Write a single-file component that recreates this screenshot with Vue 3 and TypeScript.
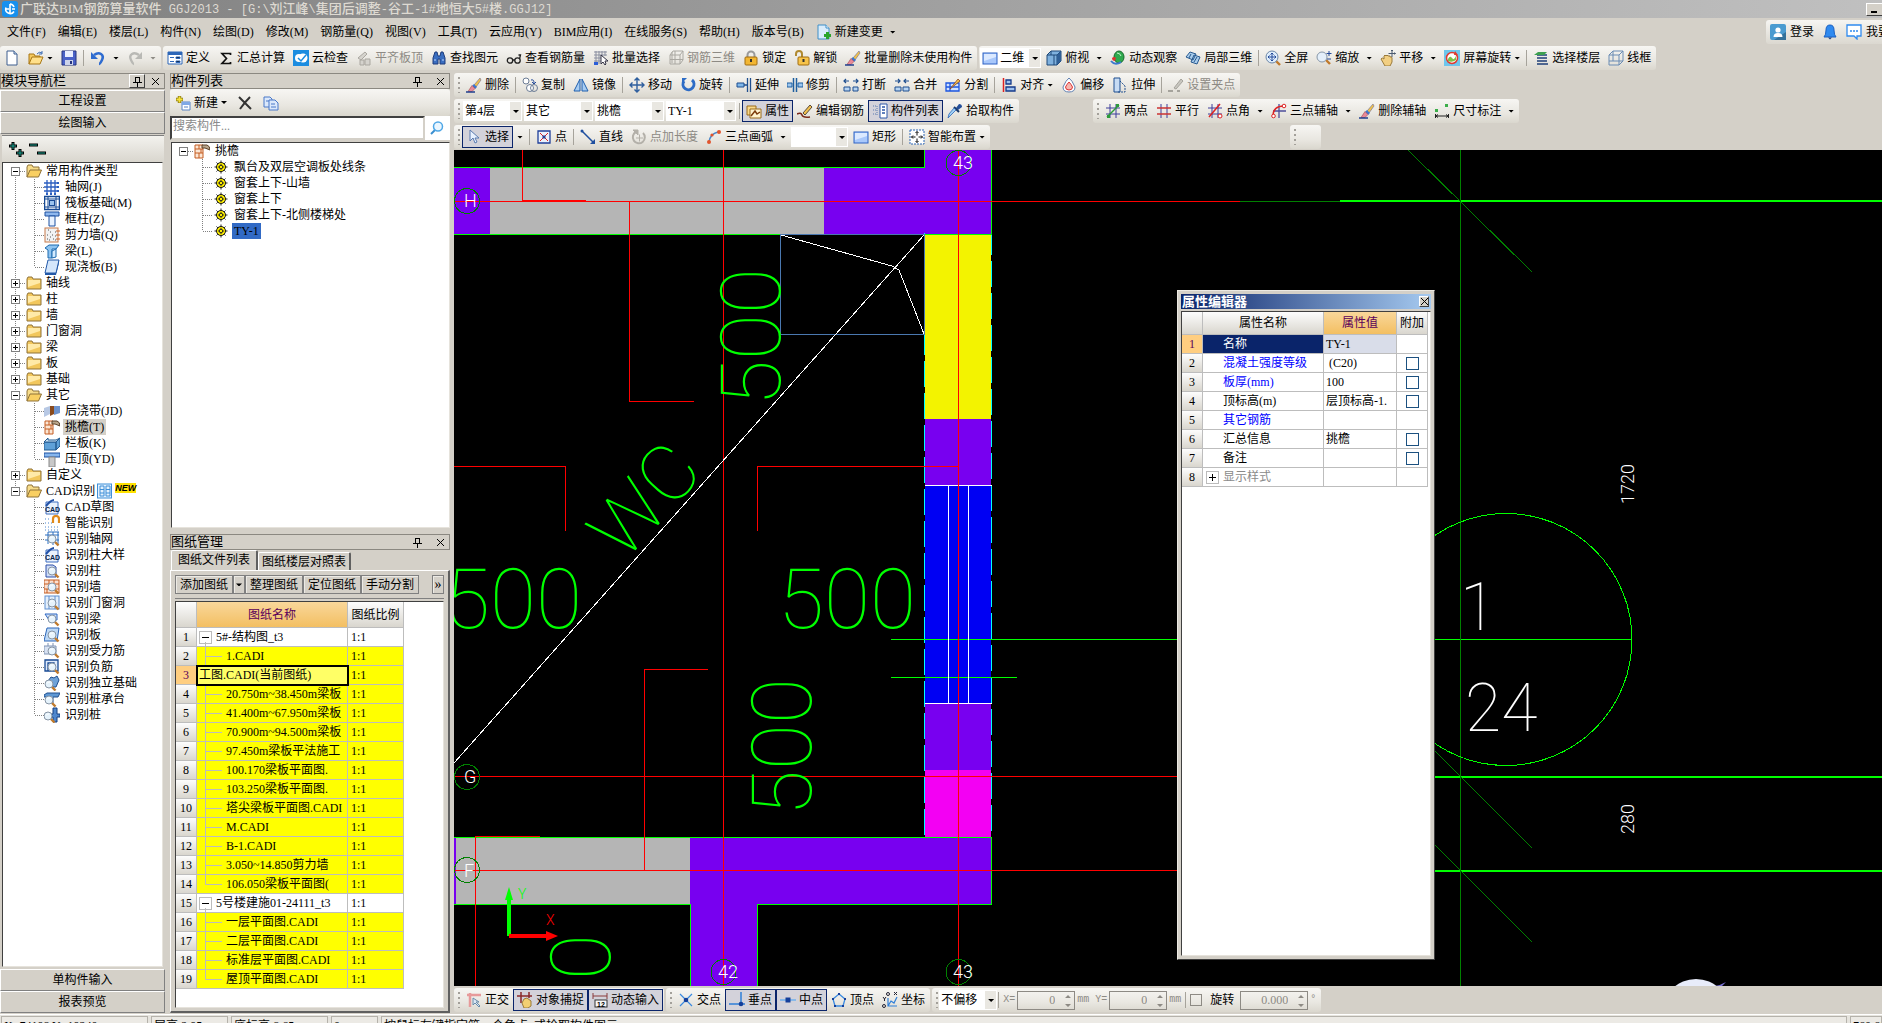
<script setup lang="ts">
import { h, type FunctionalComponent } from 'vue'

/* ---------- icon library (16 x 16 grid) ---------- */
const lens = '<path d="M10.5 10.5l4 4" stroke="#c07a2c" stroke-width="2.4"/><circle cx="8" cy="8" r="4" fill="#e6f3fc" stroke="#8795a5"/><path d="M6 7.500q1-2 3-1.500" stroke="#fff" fill="none"/>'
const brush = '<path d="M14 1L8 8l2 2 5-7z" fill="#f0c24a" stroke="#6a6a9a" stroke-width=".6"/><path d="M8 7l3 3-2 2-3-3z" fill="#3b78d0"/><path d="M6 8.500l3 3-3 3H2z" fill="#e88a9a" stroke="#933" stroke-width=".5"/><path d="M0 15h9" stroke="#1f3f8f" stroke-width="1.500"/>'
const rect = '<rect x="1" y="3" width="14" height="11" fill="#a9c8fb" stroke="#2f62c4"/><path d="M2 4h12v3L2 11z" fill="#dbe9ff"/>'
const pad = '<path d="M4 1H15M4 1v12M9 1v13M14 1v13M1 4h14M1 9h14" stroke="#2a6fc0" fill="none"/>'
const cad = '<path d="M2 3h12v12H2z" fill="#eaf2fd" stroke="#3e6fc0"/><path d="M2 7q5-6 8-6" stroke="#2352a8" stroke-width="2" fill="none"/><text x="1" y="13" font-size="7" font-weight="700" font-family="Liberation Sans" fill="#0a1f4a">CAD</text>'
const icons: Record<string, string> = {
  logo: '<rect width="16" height="16" rx="3" fill="#1790ee"/><path d="M8 3v10M4 6.500a4.500 4.500 0 0 0 8 4M12 6a4.500 4.500 0 0 0-4-3M3 8h4m3 0h3" stroke="#fff" stroke-width="1.600" fill="none"/>',
  new: '<path d="M3 1h7l3 3v11H3z" fill="#fff" stroke="#3f5f8f"/><path d="M10 1v3h3" fill="#cfe0f5" stroke="#3f5f8f"/>',
  open: '<path d="M1 14V4h5l1 2h5v2" fill="#f4c95e" stroke="#a87714"/><path d="M1 14l3-7h11l-3 7z" fill="#ffe08a" stroke="#a87714"/><path d="M9 4q2-3 5-1M14 1v3h-3" stroke="#3a6db5" fill="none"/>',
  save: '<path d="M1 1h14v14H1z" fill="#4a62c8" stroke="#27357f"/><path d="M4 1h8v6H4z" fill="#e9eeff"/><path d="M4 10h8v5H4z" fill="#cdd4ea"/><path d="M9 11h2v3H9z" fill="#27357f"/>',
  undo: '<path d="M4 5q4-3 7-1t1 6-3 4" stroke="#2f6cd0" stroke-width="2.600" fill="none"/><path d="M1 2v7h7z" fill="#2f6cd0"/>',
  redo: '<path d="M12 5Q8 2 5 4t-1 6 3 4" stroke="#b9b9b5" stroke-width="2.400" fill="none"/><path d="M15 2v7H8z" fill="#b9b9b5"/>',
  def: '<path d="M1 2h14v12H1z" fill="#fff" stroke="#2c66b8"/><path d="M1 2h14v3H1z" fill="#2c66b8"/><path d="M3 7.500h4M3 11.500h4M9 7h4v1.500H9zM9 11h4v1.500H9z" stroke="#2c66b8"/>',
  sigma: '<path d="M12.500 5V3.500H4L8.500 8.500 4 13.500h8.500V12" stroke="#111" stroke-width="1.700" fill="none"/>',
  cloud: '<rect width="16" height="16" fill="#1c8de0"/><circle cx="6" cy="8" r="4" fill="#fff"/><circle cx="10" cy="8" r="4.500" fill="#fff"/><path d="M5 8l3 3 5-6" stroke="#1c8de0" stroke-width="1.500" fill="none"/>',
  flat: '<path d="M2 8l7-6 2 2-6 6zM4 10h4v5H4zm5-1h5v6H9z" fill="#d5d3cd" stroke="#aaa7a0"/>',
  binoc: '<path d="M2 14V8l2-6h2l1 4h2l1-4h2l2 6v6h-5V9H7v5z" fill="#3a6ec0" stroke="#1e3d7c"/><path d="M3 10h2M11 10h2" stroke="#bcd6ff"/>',
  glasses: '<circle cx="4" cy="10.500" r="2.700" fill="none" stroke="#222" stroke-width="1.300"/><circle cx="11.500" cy="10.500" r="2.700" fill="none" stroke="#222" stroke-width="1.300"/><path d="M6.500 10h2.500M13.500 9l1-4h-2" stroke="#222" stroke-width="1.300" fill="none"/>',
  batch: '<path d="M1 2h13M1 5h13M1 8h7M1 11h7M3 1v13M6 1v13M9 1v6M12 1v5" stroke="#8a8fa0"/><path d="M8 5v9l2-2 2 3 1-1-1-3h3z" fill="#fff" stroke="#334"/><path d="M1 12h4v3H1z" fill="#2b5ed8"/>',
  mesh: '<path d="M2 5l3-4h10v9l-3 4H2zM2 5h10v9M12 5l3-4M2 9.500h13M7 1v13M4 2v11" stroke="#aaa8a2" fill="none"/>',
  lock: '<path d="M4.500 8V5a3.500 3.500 0 0 1 7 0v3" stroke="#9a9a9a" stroke-width="2" fill="none"/><rect x="2" y="7" width="12" height="8" rx="1" fill="#f2b632" stroke="#a06c10"/><path d="M8 9v3" stroke="#333" stroke-width="2"/>',
  unlock: '<path d="M2 6V4a3 3 0 0 1 6 0v4" stroke="#b08a30" stroke-width="2" fill="none"/><rect x="4" y="7" width="11" height="8" rx="1" fill="#f7c44a" stroke="#a06c10"/><path d="M9.500 9v3" stroke="#333" stroke-width="2"/>',
  brush, rect,
  cube: '<path d="M1 5l4-4h10v10l-4 4H1z" fill="#7fb1de" stroke="#1f4878"/><path d="M1 5h10v10M11 5l4-4M5 1v4M8 5v10" stroke="#1f4878" fill="none"/><path d="M11 5l4-4v10l-4 4z" fill="#2f5f96"/>',
  orbit: '<ellipse cx="9" cy="7" rx="5" ry="6" fill="#2faa4e" stroke="#176a2c"/><path d="M7 3q3 0 4 3" stroke="#c7f5cf" fill="none"/><path d="M1 11q4 5 10 1" stroke="#3a78cf" stroke-width="2" fill="none"/><path d="M2 8q2-2 4 0l-1 3q-3 0-3-3z" fill="#d33"/>',
  part3d: '<path d="M1 7l4-5 6 2-3 6zM6 12l3-7 6 2-3 7z" fill="#a9cdec" stroke="#28598f"/><path d="M4 8l2-4M9 12l3-5" stroke="#28598f"/>',
  full: '<path d="M11 11l4 4" stroke="#c07a2c" stroke-width="2.400"/><circle cx="7" cy="7" r="6" fill="#dfeefc" stroke="#6c87a8"/><path d="M7 3v8M3 7h8M5.500 4.500L7 3l1.500 1.500M5.500 9.500L7 11l1.500-1.500M4.500 5.500L3 7l1.500 1.500M9.500 5.500L11 7 9.500 8.500" stroke="#234a9a" fill="none"/>',
  zoomi: '<path d="M10 10l4 4" stroke="#c07a2c" stroke-width="2.400"/><circle cx="6" cy="7" r="5" fill="#e4effa" stroke="#8797a8"/><path d="M13 1v5M10.500 3.500h5M11 9h4" stroke="#234a9a"/>',
  pan: '<path d="M1 9q1-2 3 0V6q1-2 2 0 1-2 2 0 2-1 2 1 2-1 2 1v4l-2 4H5z" fill="#f2cf82" stroke="#9a7a3a"/><path d="M12 0v7M8.500 3.500h7M11 1l1-1 1 1M14.500 2.500l1 1-1 1" stroke="#4a5a70" fill="none"/>',
  rotscr: '<rect width="16" height="16" fill="#6ec6ec"/><circle cx="8" cy="8" r="5.500" fill="#fff" stroke="#e03a30" stroke-width="1.500"/><path d="M4 9q2-4 4-1t4-2v4q-4 3-8 1z" fill="#7cc24a"/><path d="M11 1l3 4h-4z" fill="#e03a30"/>',
  floor: '<path d="M4 5h10M4 8h10M4 11h10M4 14h11" stroke="#1e3f78" stroke-width="1.600"/><path d="M1 5l4-3h9l-3 3z" fill="#3da050"/>',
  wire: '<path d="M1 5l4-4h10v10l-4 4H1zM1 5h10v10M11 5l4-4M5 1v10H1M5 11h10" stroke="#6a8cb4" fill="none"/>',
  copy: '<circle cx="4" cy="4" r="3" fill="#fff" stroke="#6c7d96"/><circle cx="8" cy="11" r="3.500" fill="#fff" stroke="#6c7d96"/><circle cx="12" cy="11" r="3.500" fill="none" stroke="#6c7d96"/><path d="M9 3q3-1 3 3M10 5l2 2 2-2" stroke="#234a9a" fill="none"/>',
  mirror: '<path d="M7 2v12H1zM9 2v12h6z" fill="#a8cdf2" stroke="#1f5fae"/>',
  move: '<path d="M8 1v14M1 8h14M5.500 3.500L8 1l2.500 2.500M5.500 12.500L8 15l2.500-2.500M3.500 5.500L1 8l2.500 2.500M12.500 5.500L15 8l-2.500 2.500" stroke="#2f5f9e" stroke-width="1.400" fill="none"/>',
  rotate: '<path d="M4 4a5.500 5.500 0 1 0 8-1" stroke="#2d6cc6" stroke-width="3" fill="none"/><path d="M2 6V1h5z" fill="#2d6cc6"/>',
  extend: '<path d="M1 6h7v4H1z" fill="#7fb7ea" stroke="#1f4f8f"/><path d="M8 8h4M11.500 1v14M14.500 1v14" stroke="#1f4f8f" stroke-width="1.300"/>',
  trim: '<path d="M0 6h5v4H0zM11 6h5v4h-5z" fill="#9cc6ee" stroke="#1f5f9f"/><path d="M6.500 1v14M9.500 1v14" stroke="#1f5f9f" stroke-width="1.500"/>',
  brk: '<path d="M1 10h6v4H1zM10 10h5v4h-5z" fill="#b7d4f2" stroke="#1f4f8f"/><path d="M1 4h5M3 2L1 4l2 2M10 4h5M13 2l2 2-2 2" stroke="#1f4f8f" stroke-width="1.200" fill="none"/>',
  merge: '<path d="M1 10h6v4H1zM9 10h6v4H9z" fill="#b7d4f2" stroke="#1f4f8f"/><path d="M1 4h5M4 2l2 2-2 2M10 4h5M12 2l-2 2 2 2" stroke="#1f4f8f" stroke-width="1.200" fill="none"/>',
  split: '<path d="M1 6h13v8H1zM1 10h13M5 6v8" stroke="#1d55e0" fill="#cfe0ff" stroke-width="1.300"/><path d="M5 12l8-10 2 2z" fill="#f2c14e" stroke="#842" stroke-width=".8"/>',
  align: '<path d="M2.500 1v14" stroke="#d22" stroke-width="1.500"/><path d="M5 3h5v4H5zM5 10h9v4H5z" fill="#9fc2ee" stroke="#153a8a" stroke-width="1.300"/>',
  offset: '<path d="M8 1q3 2 6 9 0 5-6 5t-6-5q3-7 6-9z" fill="#fff" stroke="#5f7fb0"/><path d="M8 5q2 2 3.500 5 0 3-3.500 3t-3.500-3Q6 7 8 5z" fill="#f7b7b0" stroke="#d33"/>',
  stretch: '<path d="M2 1h6v14H2z" fill="#c7dcf4" stroke="#1f4f8f"/><path d="M8 4l5 5v6H5" stroke="#1f4f8f" stroke-dasharray="2 1" fill="none"/>',
  setpt: '<path d="M6 11l7-9 2 2-7 8z" fill="#c9c7c0" stroke="#a5a39c"/><path d="M0 14h5M9 14h3" stroke="#a5a39c" stroke-width="2"/>',
  prop: '<path d="M1 3h9v9H1z" fill="#f9d98a" stroke="#9a6a1a"/><path d="M4 6h11v9H4z" fill="#fff4cf" stroke="#9a6a1a"/><path d="M5 13l4-5 2 3 3-2" stroke="#7a3a0a" stroke-width="1.500" fill="none"/>',
  edit: '<path d="M6 10l7-8 2 2-7 8z" fill="#f2c14e" stroke="#5a4a3a"/><path d="M0 11q4-2 5 1t8 2" stroke="#7a2a1a" stroke-width="1.600" fill="none"/>',
  clist: '<path d="M1 3h3M1 7h3M1 11h3M5 3v9" stroke="#5a7ab0" stroke-dasharray="1 1"/><path d="M8 1h7v14H8z" fill="#fff" stroke="#2c56a8"/><path d="M10 4h3M10 7h3M10 10h3" stroke="#2c56a8" stroke-width="1.500"/>',
  pick: '<path d="M9 5l3-4q3 0 3 3l-4 3z" fill="#244f9a"/><path d="M7 4l5 5" stroke="#183768" stroke-width="2"/><path d="M9 7l-7 7-1 1 1-4 5-6z" fill="#9fd0f5" stroke="#2c66b8" stroke-width=".8"/>',
  two: '<path d="M5 1v14M11 1v14M1 5h14M1 11h14" stroke="#3d3d9a"/><path d="M2 14L14 2" stroke="#2c9a3a" stroke-width="1.500"/><path d="M2 12h3v3H2zM11 1h3v3h-3z" fill="#2c9a3a"/>',
  par: '<path d="M5 1v14M11 1v14" stroke="#3d3d9a"/><path d="M1 5h14M1 11h14" stroke="#c33" stroke-width="1.500"/>',
  ang: '<path d="M5 1v14M11 1v14M1 5h14M1 11h14" stroke="#3d3d9a"/><path d="M2 14L13 1" stroke="#d22" stroke-width="1.500"/><circle cx="13" cy="13" r="2" fill="#fff" stroke="#d22"/>',
  arc3: '<path d="M8 1v14M2 8h13" stroke="#4d4d9a" stroke-width="1.300"/><path d="M2 13Q2 3 13 3" stroke="#d22" stroke-width="1.500" fill="none"/><circle cx="2.500" cy="13" r="1.800" fill="#fff" stroke="#d22"/><circle cx="13" cy="3" r="1.800" fill="#fff" stroke="#d22"/>',
  dim: '<path d="M1 6h3v3H1zM11 1h3v3h-3z" fill="#3cae4a"/><path d="M1.500 11v4M14.500 11v4M2 13h12M4 11.500L2 13l2 1.500M12 11.500l2 1.500-2 1.500" stroke="#222" fill="none"/>',
  cursor: '<path d="M4 1v11l3-3 2 5 2-1-2-4h4z" fill="#e8f1ff" stroke="#5a7bb0"/>',
  pt: '<path d="M2 2h12v12H2z" fill="#eaf0fb" stroke="#1f3f9a" stroke-width="1.300"/><path d="M4 4l8 8M12 4l-8 8" stroke="#d22"/><path d="M6.500 6.500h3v3h-3z" fill="#1f3f9a"/>',
  line: '<path d="M2 2l11 11" stroke="#1f4f9f" stroke-width="1.500"/><path d="M15 15h-5l5-5z" fill="#1f4f9f"/><circle cx="2" cy="2" r="1.500" fill="#1f4f9f"/>',
  ptlen: '<path d="M5 3a6 6 0 1 0 7 1" stroke="#b3b0a9" stroke-width="2" fill="none"/><path d="M2 1h5v5zM5 9h7M8.500 5.500v7" fill="#b3b0a9" stroke="#b3b0a9"/>',
  arc: '<path d="M3 13Q4 5 12 3" stroke="#4a86c8" stroke-width="1.500" fill="none"/><circle cx="3" cy="13" r="2" fill="#e2542c"/><circle cx="6" cy="6" r="1.600" fill="#e2542c"/><circle cx="13" cy="3" r="2" fill="#e2542c"/>',
  smart: '<rect x="1" y="1" width="14" height="14" fill="#fff" stroke="#2c66b8" stroke-dasharray="2 1"/><path d="M8 2.500v4M8 9.500v4M2.500 8h4M9.500 8h4M6.500 4L8 2.500 9.500 4M6.500 12L8 13.500 9.500 12M4 6.500L2.500 8 4 9.500M12 6.500L13.500 8 12 9.500" stroke="#111" fill="none"/>',
  ortho: '<path d="M1 3h14M4 1v14" stroke="#e79a9a" stroke-width="2.500"/><path d="M7 6v7l2-2 4 4 1-1-4-4h3z" fill="#dce8f4" stroke="#6a8cab"/>',
  snap: '<path d="M0 4h15M4 0v11M12 0v6" stroke="#8a2a2a" stroke-width="1.500"/><path d="M5 11l2-4 3-1 4 3v5l-3 2H7z" fill="#f2cf72" stroke="#9a7a3a"/>',
  dyn: '<path d="M1 1v6M15 1v6M1 4h14" stroke="#8a3a3a"/><rect x="3" y="8" width="12" height="7" fill="#f8f8f8" stroke="#333"/><text x="5" y="14.500" font-size="7" font-family="Liberation Sans" font-weight="700">12</text>',
  cross: '<path d="M2 2l12 12M14 2L2 14" stroke="#3a8ae0" stroke-width="1.200"/><circle cx="8" cy="8" r="2.300" fill="#153f9a"/>',
  perp: '<path d="M12 0v13M0 12h16" stroke="#2f7fd8" stroke-width="1.500"/><circle cx="12" cy="12" r="2.300" fill="#153f9a"/>',
  mid: '<path d="M0 8h16" stroke="#6fb0ee" stroke-width="1.500"/><path d="M5.500 5.500h5v5h-5z" fill="#153f9a"/>',
  vertex: '<path d="M8 2l6 5-2 7H4L2 7z" fill="none" stroke="#3a8ae0" stroke-width="1.300"/><path d="M7 1h2v2H7zM1 6h2v2H1zM13 6h2v2h-2zM3 13h2v2H3zM11 13h2v2h-2z" fill="#153f9a"/>',
  coord: '<path d="M6 6v8h9M6 14l3-5 3 2 3-6" stroke="#2f7fd8" fill="none" stroke-width="1.200"/><circle cx="6" cy="2" r="1.500" fill="none" stroke="#223"/><circle cx="2" cy="14" r="1.500" fill="none" stroke="#223"/><path d="M12 0l3 3M15 0l-3 3M1 5l1.500 2L4 5M2.500 7v2" stroke="#223" fill="none"/>',
  user: '<rect width="16" height="16" rx="2" fill="#4a9bd0"/><path d="M4 16l12-8v8z" fill="#33719a"/><circle cx="8" cy="6" r="2.600" fill="#fff"/><path d="M3.500 13q0-4 4.500-4t4.500 4z" fill="#fff"/>',
  bell: '<path d="M2 13q2-2 2-7 0-5 4-5t4 5q0 5 2 7z" fill="#2f8af0" stroke="#1a5fc0"/><path d="M6 13.500h4L8 15.500z" fill="#1a3f80"/>',
  chat: '<path d="M1 1h14v11h-4v3l-3-3H1z" fill="#fff" stroke="#2f8af0" stroke-width="1.300"/><path d="M4 7h2M7 7h2M10 7h2" stroke="#2f8af0" stroke-width="1.600"/>',
  change: '<path d="M2 1h8l3 3v11H2z" fill="#d9ecfb" stroke="#3f8fc8"/><path d="M10 1v3h3" fill="#fff" stroke="#3f8fc8"/><path d="M11.500 8v7M8 11.500h7" stroke="#2aa52a" stroke-width="3"/>',
  addNew: '<path d="M4.500 1v7M1 4.500h7" stroke="#8a7a10" stroke-width="3.400"/><path d="M4.500 1.500v6M1.500 4.500h6" stroke="#f6e23a" stroke-width="1.800"/><path d="M7 7h8v8H7z" fill="#fff" stroke="#5a84c4"/><path d="M7 7h8v3H7z" fill="#7fa8e6"/><path d="M9 12h4" stroke="#5a84c4"/>',
  x: '<path d="M2 2l12 12M13 2Q8 7 3 14" stroke="#333" stroke-width="2" fill="none"/>',
  docs: '<path d="M1 2h6l2 2v8H1z" fill="#dbe8fb" stroke="#4a78c8"/><path d="M6 5h6l3 3v7H6z" fill="#dbe8fb" stroke="#4a78c8"/><path d="M8 9h4M8 12h5M3 6h3" stroke="#4a78c8"/>',
  search: '<path d="M6 10l-4 4" stroke="#3a8fd0" stroke-width="2"/><circle cx="9" cy="6.500" r="4.500" fill="#eaf6ff" stroke="#4fa7e6" stroke-width="1.500"/>',
  folder: '<path d="M1 4l1-2h4l1 2h8v10H1z" fill="#f2c75c" stroke="#8f7238"/><path d="M2 5h12v3L2 12z" fill="#ffeaa8"/>',
  folderOpen: '<path d="M1 14V4l1-2h4l1 2h6v3" fill="#f7dc8a" stroke="#8f7238"/><path d="M1 14l3-7h11.500l-3 7z" fill="#f9cf62" stroke="#8f7238"/>',
  grid: '<path d="M0 4h13M0 8h13M0 12h13M3 1v13M7 1v13M11 1v13" stroke="#2c5fc0" stroke-width="1.300"/><path d="M13 3h2v2h-2zM13 7h2v2h-2zM13 11h2v2h-2zM2 14h2v2H2zM6 14h2v2H6zM10 14h2v2h-2z" fill="#2c5fc0"/>',
  raft: '<rect x=".5" y="1.500" width="15" height="13" fill="#fff" stroke="#174a94" stroke-width="1.500"/><path d="M1 4h14M1 12h14M4 2v12M12 2v12" stroke="#174a94"/><rect x="5.500" y="5.500" width="5" height="5" fill="#9cc4ee" stroke="#174a94"/>',
  col: '<path d="M1 1h14v4H1z" fill="#8fb8ee" stroke="#1c50a0"/><path d="M5 5h6v10H5z" fill="#e8f2ff" stroke="#1c50a0"/>',
  wall: '<rect x="1" y="1" width="13" height="14" fill="#f2f2f2" stroke="#c77b4a"/><path d="M3 12h1M6 10h1M5 13h1M9 12h1M11 13h1M8 8h1M11 9h1M3 8h1M6 5h1M11 5h1M4 3h1" stroke="#555"/><path d="M12 4h4M12 8h4M12 12h4" stroke="#d0662a"/>',
  beam: '<path d="M1 5l4-3h10l-3 4H8v9H4V7z" fill="#8fc4f0" stroke="#1c6ab0"/><path d="M8 8l4-2v8l-4 1z" fill="#d4ebff" stroke="#1c6ab0"/>',
  slab: '<path d="M4 1h11l-3 13H1z" fill="#d4e6fb" stroke="#2258a8"/><path d="M1 14h11l3-13v3l-3 12H1z" fill="#2258a8"/>',
  strip: '<path d="M0 5l6-2v8l-6 3z" fill="#b7c8e4"/><path d="M6 3h4v8l-4 2z" fill="#8a4a1c"/><path d="M10 3h6v7l-6 2z" fill="#6f93cc"/>',
  eave: '<path d="M1 2h8v13H1z" fill="#fbe6d4" stroke="#c45c22"/><path d="M1 6h8M1 10h8M5 2v4M7 6v4M5 10v5" stroke="#c45c22"/><path d="M8 2h5q3 1 3 5l-5-2H8z" fill="#b9a58a" stroke="#5a4028"/>',
  rail: '<path d="M0 7h12v8H0zM12 7l4-4v8l-4 4z" fill="#5fa1d8" stroke="#225a90"/><path d="M0 7l4-4v2h8l4-2-4 4z" fill="#cfe6f8" stroke="#225a90"/>',
  cap: '<path d="M0 2h16v4H0z" fill="#86b6ee" stroke="#1c50a0"/><path d="M5 6h6v10H5z" fill="#c8c8c8" stroke="#888"/>',
  magnet: '<path d="M1 4h5M1 8h8M1 12h14M1 15h14" stroke="#4a86d0" stroke-dasharray="1 2"/><path d="M9 8V4a3 3 0 0 1 6 0v4" stroke="#e08a1a" stroke-width="2.200" fill="none"/>',
  cad, idcad: cad, idgrid: pad + lens,
  idcol: '<path d="M2 2h7l3 2v10H2z" fill="#cfdcf6" stroke="#2c4fa8"/>' + lens,
  idwall: '<rect x="0" y="1" width="15" height="13" fill="#fbe0d0" stroke="#c45c22"/><path d="M0 5h15M0 10h15M5 1v4M10 1v4M3 10v4" stroke="#c45c22"/>' + lens,
  idwin: '<rect x="1" y="1" width="14" height="13" fill="#e3effc" stroke="#5f8fd0"/><path d="M5 1v13M11 1v13" stroke="#5f8fd0"/>' + lens,
  idbeam: '<path d="M1 3h12v6H5z" fill="#cfe0fa" stroke="#2c66c0"/>' + lens,
  idslab: '<path d="M3 1h12l-2 13H0z" fill="#bcd8f6" stroke="#2c66b8"/>' + lens,
  idbar: '<path d="M0 3h12v8H0zM4 3V0M9 3V0" fill="#d8e2f2" stroke="#7f93b4"/>' + lens,
  idneg: '<path d="M1 1h13v11H1zM4 12V4h6v6" fill="#e0ebfb" stroke="#174a94" stroke-width="1.300"/>' + lens,
  idfound: '<path d="M4 6l3-4 3 1 3-2 2 4-3 7H5z" fill="#6fa2d8" stroke="#1f4f8f"/><g transform="translate(-3 1)">' + lens + '</g>',
  idcap: '<path d="M0 4l3-2h13l-2 4H9v6H6V6H0z" fill="#5f98d4" stroke="#1f4f8f"/><g transform="translate(-3 1)">' + lens + '</g>',
  idpile: '<path d="M9 1h4v6h3v3h-3v5H9v-5H7V7h2z" fill="#4f86cc" stroke="#153f80"/><g transform="translate(-4 1)">' + lens + '</g>',
  gear: '<circle cx="8" cy="8" r="4.500" fill="#ffef00" stroke="#111"/><path d="M8 1.500v13M1.500 8h13M3.500 3.500l9 9M12.500 3.500l-9 9" stroke="#222" stroke-dasharray="2 9 2"/><path d="M8 5v6M5 8h6" stroke="#222" stroke-width=".8"/><circle cx="8" cy="8" r="1.800" fill="#ffef00" stroke="#222"/>',
  panes: '<rect x="0.500" y="1" width="14" height="14" fill="#e3f1fd" stroke="#3f8fd8"/><path d="M3 3h4v10H3zM9 3h4v10H9zM3 6.500h4M3 10h4M9 6.500h4M9 10h4" fill="none" stroke="#3f8fd8"/>',
}

interface IconProps { name: string }
const Icon: FunctionalComponent<IconProps> = (p) =>
  h('svg', { class: 'icon', width: 16, height: 16, viewBox: '0 0 16 16', 'aria-hidden': 'true', innerHTML: icons[p.name] ?? '' })
Icon.props = ['name']

/* ---------- toolbars ---------- */
interface Item {
  kind: 'tool' | 'sep' | 'grip' | 'combo'
  icon?: string
  label?: string
  mods?: string
  width?: number
}
const t = (icon: string, label = '', mods = ''): Item => ({ kind: 'tool', icon, label, mods })
const combo = (label: string, width: number, icon?: string): Item => ({ kind: 'combo', label, width, icon })
const sep: Item = { kind: 'sep' }
const grip: Item = { kind: 'grip' }

const Bar: FunctionalComponent<{ items: Item[] }> = (p) =>
  h('div', { class: 'bar', role: 'toolbar' }, p.items.map((it) => {
    if (it.kind === 'sep') return h('i', { class: 'sep' })
    if (it.kind === 'grip') return h('i', { class: 'grip' })
    if (it.kind === 'combo') {
      return h('label', { class: 'combo', style: { width: it.width + 'px' } }, [
        it.icon ? h(Icon, { name: it.icon }) : null,
        h('select', { 'aria-label': it.label || '弧形方式' }, [h('option', it.label)]),
      ])
    }
    return h('button', { type: 'button', class: ['tool', it.mods], disabled: it.mods === 'dim' }, [
      it.icon ? h(Icon, { name: it.icon }) : null,
      it.label ? h('span', it.label) : null,
      /arrow|tight/.test(it.mods ?? '') ? h('i', { class: 'tri' }) : null,
    ])
  }))
Bar.props = ['items']

const menus = ['文件(F)', '编辑(E)', '楼层(L)', '构件(N)', '绘图(D)', '修改(M)', '钢筋量(Q)', '视图(V)', '工具(T)', '云应用(Y)', 'BIM应用(I)', '在线服务(S)', '帮助(H)', '版本号(B)']

const topBars: Item[][] = [
  [t('new'), t('open', '', 'tight'), t('save'), sep, t('undo', '', 'arrow'), t('redo', '', 'arrow pale')],
  [t('def', '定义'), t('sigma', '汇总计算'), t('cloud', '云检查'), t('flat', '平齐板顶', 'dim'), t('binoc', '查找图元'), t('glasses', '查看钢筋量'), t('batch', '批量选择'), t('mesh', '钢筋三维', 'dim'), t('lock', '锁定'), t('unlock', '解锁'), t('brush', '批量删除未使用构件')],
  [combo('二维', 61, 'rect'), t('cube', '俯视', 'arrow'), t('orbit', '动态观察'), t('part3d', '局部三维'), sep, t('full', '全屏'), t('zoomi', '缩放', 'arrow'), t('pan', '平移', 'arrow'), t('rotscr', '屏幕旋转', 'tight'), sep, t('floor', '选择楼层'), t('wire', '线框')],
]
const midRows: Item[][][] = [
  [[grip, t('brush', '删除'), sep, t('copy', '复制'), t('mirror', '镜像'), sep, t('move', '移动'), t('rotate', '旋转'), sep, t('extend', '延伸'), t('trim', '修剪'), sep, t('brk', '打断'), t('merge', '合并'), t('split', '分割'), sep, t('align', '对齐', 'tight'), t('offset', '偏移'), t('stretch', '拉伸'), sep, t('setpt', '设置夹点', 'dim')]],
  [
    [grip, combo('第4层', 59), combo('其它', 69), combo('挑檐', 69), combo('TY-1', 70), sep, t('prop', '属性', 'on'), t('edit', '编辑钢筋'), t('clist', '构件列表', 'on'), t('pick', '拾取构件')],
    [grip, t('two', '两点'), t('par', '平行'), t('ang', '点角', 'arrow'), t('arc3', '三点辅轴', 'arrow'), t('brush', '删除辅轴'), t('dim', '尺寸标注', 'arrow')],
  ],
  [
    [grip, t('cursor', '选择', 'on'), t('', '', 'arrow bare'), sep, t('pt', '点'), sep, t('line', '直线'), t('ptlen', '点加长度', 'dim'), t('arc', '三点画弧', 'arrow'), combo('', 57), t('rect', '矩形'), sep, t('smart', '智能布置', 'tight')],
    [grip],
  ],
]
const snapBars: Item[][] = [
  [grip, t('ortho', '正交'), t('snap', '对象捕捉', 'on'), t('dyn', '动态输入', 'on')],
  [grip, t('cross', '交点'), t('perp', '垂点', 'on'), t('mid', '中点', 'on'), t('vertex', '顶点'), t('coord', '坐标')],
]

/* ---------- module tree ---------- */
interface Node { text: string; icon?: string; open?: boolean; on?: boolean; kids?: Node[]; fresh?: boolean }
const k = (icon: string, text: string, on = false): Node => ({ icon, text, on })
const modules: Node[] = [
  { text: '常用构件类型', open: true, kids: [k('grid', '轴网(J)'), k('raft', '筏板基础(M)'), k('col', '框柱(Z)'), k('wall', '剪力墙(Q)'), k('beam', '梁(L)'), k('slab', '现浇板(B)')] },
  { text: '轴线' }, { text: '柱' }, { text: '墙' }, { text: '门窗洞' }, { text: '梁' }, { text: '板' }, { text: '基础' },
  { text: '其它', open: true, kids: [k('strip', '后浇带(JD)'), k('eave', '挑檐(T)', true), k('rail', '栏板(K)'), k('cap', '压顶(YD)')] },
  { text: '自定义' },
  { text: 'CAD识别', open: true, fresh: true, kids: [k('cad', 'CAD草图'), k('magnet', '智能识别'), k('idgrid', '识别轴网'), k('idcad', '识别柱大样'), k('idcol', '识别柱'), k('idwall', '识别墙'), k('idwin', '识别门窗洞'), k('idbeam', '识别梁'), k('idslab', '识别板'), k('idbar', '识别受力筋'), k('idneg', '识别负筋'), k('idfound', '识别独立基础'), k('idcap', '识别桩承台'), k('idpile', '识别桩')] },
]
const parts = ['飘台及双层空调板处线条', '窗套上下-山墙', '窗套上下', '窗套上下-北侧楼梯处', 'TY-1']

/* ---------- drawing sheets ---------- */
interface Sheet { name: string; group?: boolean; current?: boolean; last?: boolean }
const sheets: Sheet[] = [
  { name: '5#-结构图_t3', group: true }, { name: '1.CADI' }, { name: '工图.CADI(当前图纸)', current: true },
  { name: '20.750m~38.450m梁板' }, { name: '41.400m~67.950m梁板' }, { name: '70.900m~94.500m梁板' }, { name: '97.450m梁板平法施工' },
  { name: '100.170梁板平面图.' }, { name: '103.250梁板平面图.' }, { name: '塔尖梁板平面图.CADI' }, { name: 'M.CADI' }, { name: 'B-1.CADI' },
  { name: '3.050~14.850剪力墙' }, { name: '106.050梁板平面图(', last: true },
  { name: '5号楼建施01-24111_t3', group: true }, { name: '一层平面图.CADI' }, { name: '二层平面图.CADI' }, { name: '标准层平面图.CADI' }, { name: '屋顶平面图.CADI', last: true },
]

interface Prop { name: string; value: string; tone?: string; check?: boolean }
const props: Prop[] = [
  { name: '名称', value: 'TY-1', tone: 'active' },
  { name: '混凝土强度等级', value: ' (C20)', tone: 'blue', check: true },
  { name: '板厚(mm)', value: '100', tone: 'blue', check: true },
  { name: '顶标高(m)', value: '层顶标高-1.', check: true },
  { name: '其它钢筋', value: '', tone: 'blue' },
  { name: '汇总信息', value: '挑檐', check: true },
  { name: '备注', value: '', check: true },
  { name: '显示样式', value: '', tone: 'grey' },
]
</script>

<template>
  <div class="app">
    <header class="title">
      <Icon name="logo" />
      <h1>广联达BIM钢筋算量软件<code> GGJ2013 - [G:\</code>刘江峰<code>\</code>集团后调整<code>-</code>谷工<code>-1#</code>地恒大<code>5#</code>楼<code>.GGJ12]</code></h1>
      <button type="button" class="winbtn" aria-label="最小化"></button>
    </header>

    <nav class="menu">
      <a v-for="m in menus" :key="m" href="#">{{ m }}</a>
      <a href="#" class="change"><Icon name="change" />新建变更<i class="tri"></i></a>
      <div class="account">
        <a href="#"><Icon name="user" />登录</a>
        <a href="#" aria-label="消息"><Icon name="bell" /></a>
        <a href="#"><Icon name="chat" />我要</a>
      </div>
    </nav>

    <div class="barrow"><Bar v-for="(b, i) in topBars" :key="i" :items="b" /></div>

    <div class="work">
      <aside class="modules">
        <div class="cap"><b>模块导航栏</b><span class="pinbox"><svg width="9" height="11"><path d="M2.500 1v5M6.500 1v5M2 1.500h5M0 6.500h9M4.500 7v4" /></svg></span><svg class="close" width="9" height="9"><path d="M1 1l7 7M8 1L1 8" /></svg></div>
        <button type="button" class="slot">工程设置</button>
        <button type="button" class="slot">绘图输入</button>
        <div class="mini">
          <svg width="40" height="18"><path d="M5 1v8M1 5h8M12 8v8M8 12h8M21 4h9M29 12h9" stroke="#000" stroke-width="3" /><path d="M5 2v6M2 5h6M12 9v6M9 12h6M22 4h7M30 12h7" stroke="#1aa392" stroke-width="1" /></svg>
        </div>
        <ul class="tree">
          <template v-for="(n, i) in modules" :key="n.text">
            <li class="root">
              <svg class="guide" width="23" height="16">
                <path class="dots" :d="i === 0 ? 'M12.500 12v4' : i === modules.length - 1 ? 'M12.500 0v4' : 'M12.500 0v16'" />
                <path class="dots" d="M17 8.500h6" />
                <rect x="8.500" y="4.500" width="8" height="8" class="box" />
                <path :d="n.open ? 'M10 8.500h5' : 'M10 8.500h5M12.500 6v5'" class="sign" />
              </svg>
              <Icon :name="n.open ? 'folderOpen' : 'folder'" /><span class="txt">{{ n.text }}</span>
              <template v-if="n.fresh"><Icon name="panes" /><em class="fresh">NEW</em></template>
            </li>
            <li v-for="(c, j) in n.kids" :key="c.text">
              <svg class="guide" width="41" height="16">
                <path v-if="i < modules.length - 1" class="dots" d="M12.500 0v16" />
                <path class="dots" :d="j === n.kids!.length - 1 ? 'M31.500 0v8' : 'M31.500 0v16'" />
                <path class="dots" d="M32 8.500h9" />
              </svg>
              <Icon :name="c.icon!" /><span class="txt" :class="{ on: c.on }">{{ c.text }}</span>
            </li>
          </template>
        </ul>
        <button type="button" class="slot">单构件输入</button>
        <button type="button" class="slot">报表预览</button>
      </aside>

      <div class="panels">
        <section class="partlist">
          <div class="cap"><b>构件列表</b><svg class="pin" width="9" height="11"><path d="M2.500 1v5M6.500 1v5M2 1.500h5M0 6.500h9M4.500 7v4" /></svg><svg class="close" width="9" height="9"><path d="M1 1l7 7M8 1L1 8" /></svg></div>
          <Bar class="listbar" :items="[t('addNew', '新建', 'tight'), t('x'), t('docs')]" />
          <div class="find">
            <input type="text" placeholder="搜索构件..." aria-label="搜索构件" />
            <button type="button" aria-label="搜索"><Icon name="search" /></button>
          </div>
          <ul class="tree">
            <li>
              <svg class="guide" width="22" height="16"><path class="dots" d="M16 8.500h6" /><rect x="7.500" y="4.500" width="8" height="8" class="box" /><path d="M9 8.500h5" class="sign" /></svg>
              <Icon name="eave" /><span class="txt">挑檐</span>
            </li>
            <li v-for="(p, i) in parts" :key="p">
              <svg class="guide" width="41" height="16">
                <path class="dots" :d="i === parts.length - 1 ? 'M30.500 0v8' : 'M30.500 0v16'" /><path class="dots" d="M31 8.500h10" />
              </svg>
              <Icon name="gear" /><span class="txt" :class="{ picked: p === 'TY-1' }">{{ p }}</span>
            </li>
          </ul>
        </section>

        <section class="sheets">
          <div class="cap"><b>图纸管理</b><svg class="pin" width="9" height="11"><path d="M2.500 1v5M6.500 1v5M2 1.500h5M0 6.500h9M4.500 7v4" /></svg><svg class="close" width="9" height="9"><path d="M1 1l7 7M8 1L1 8" /></svg></div>
          <div class="tabs"><button type="button" class="cur">图纸文件列表</button><button type="button">图纸楼层对照表</button></div>
          <div class="pane">
            <div class="cmds">
              <button type="button">添加图纸</button><button type="button" class="drop" aria-label="更多添加方式"><i class="tri"></i></button>
              <button type="button">整理图纸</button><button type="button">定位图纸</button><button type="button">手动分割</button>
              <button type="button" class="more">»</button>
            </div>
            <div class="sheetbox">
              <table class="grid">
                <colgroup><col class="cnum" /><col class="cname" /><col class="cscale" /></colgroup>
                <thead><tr><th></th><th class="hot">图纸名称</th><th>图纸比例</th></tr></thead>
                <tbody>
                  <tr v-for="(s, i) in sheets" :key="s.name" :class="{ group: s.group, current: s.current }">
                    <th scope="row">{{ i + 1 }}</th>
                    <td class="name"><div>
                      <svg v-if="s.group" width="19" height="18"><path d="M8.500 14v4" class="branch" /><rect x="2.500" y="3.500" width="12" height="12" fill="#fff" class="branch" /><path d="M5 9.500h7" stroke="#000" /></svg>
                      <svg v-else-if="!s.current" width="29" height="18"><path :d="s.last ? 'M8.500 0v9.500H25' : 'M8.500 0v18M8.500 9.500H25'" class="branch" /></svg>
                      <span>{{ s.name }}</span>
                    </div></td>
                    <td>1:1</td>
                  </tr>
                </tbody>
              </table>
            </div>
          </div>
        </section>
      </div>

      <main class="stage">
        <div v-for="(row, r) in midRows" :key="r" class="barrow" :class="'mid' + r"><Bar v-for="(b, i) in row" :key="i" :items="b" /></div>

        <div class="canvas">
          <svg class="plan" width="100%" height="100%">
            <g transform="translate(-454 -150)">
              <g class="crisp">
                <path fill="#7800f0" d="M454 167h36v67h-36zM824 167h101v-17h67v84H824zM925 419h67v66h-67zM925 703h67v67h-67zM454 837h2v67h-2zM690 837h302v67H757v82h-67z" />
                <path d="M490 167h334v67H490zM456 837h234v67H456z" fill="#b5b5b5" />
                <path d="M925 235h67v184h-67z" fill="#f3f300" />
                <path d="M925 485h67v218h-67z" fill="#0000f3" />
                <path d="M925 770h67v67h-67z" fill="#f300f3" />
                <path d="M924.500 235v602M991.500 235v602" stroke="#000" />
                <path d="M924.500 233v604M991.500 229v608" stroke="#00ffff" stroke-dasharray="26 6" />
                <g fill="none" stroke="#00ff00">
                  <path d="M454 167.500H924.500V150M991.500 150V234.500H454M454 837.500H991.500V904.500H757.500V986M690.500 986V904.500H454" />
                  <path d="M891 639.500H1632M891 677.500h126" />
                  <path d="M1340 201H1882M1435 777H1882M1435 871H1882" stroke-width="2" />
                </g>
                <path d="M1240 201.500h100M1460.500 150v836" stroke="#008000" />
                <path d="M924.500 485.500h67M924.500 703.500h67M948.500 486v217M968.500 486v217" stroke="#fff" />
                <path d="M780.500 234.500h144v100h-144z" fill="none" stroke="#4a78b0" />
                <g fill="none" stroke="#ff0000">
                  <path d="M454 201.500H1240M454 776.500H1200M454 870.500H1200M723.500 150v836M958.500 150v836" />
                  <path d="M522.500 150V200.500H586M629.500 202V401.500H694M454 466.500H565.500V531M958 466.500H757.500V531M708 669.500H644.500V870M540 836.500H475.500V986" />
                </g>
                <path d="M1408 150L1532 272M1435 751L1532 848M1435 845L1532 942" stroke="#008000" />
                <path d="M924 235L454 763M781 235L892 266L899 270L924 334" fill="none" stroke="#fff" />
                <circle cx="1506" cy="639.500" r="126" fill="none" stroke="#00ff00" />
                <g fill="none" stroke="#008000">
                  <circle cx="467" cy="201" r="12.500" /><circle cx="467" cy="777" r="12.500" /><circle cx="467" cy="870" r="12.500" />
                  <circle cx="958.500" cy="163" r="12.500" /><circle cx="958.500" cy="972" r="12.500" /><circle cx="723.500" cy="972" r="12.500" />
                </g>
              </g>
              <g class="cad axis">
                <text x="464" y="207">H</text><text x="464" y="783">G</text><text x="464" y="877">F</text>
                <text x="953" y="169">43</text><text x="953" y="978">43</text><text x="718" y="978">42</text>
              </g>
              <g class="cad big">
                <text x="778" y="628">500</text><text x="444" y="628">500</text>
                <text transform="translate(780 406) rotate(-90)">500</text>
                <text transform="translate(811 816) rotate(-90)">500</text>
                <text transform="translate(610 980) rotate(-90)">0</text>
                <text class="room" transform="translate(624 563) rotate(-48)">WC</text>
              </g>
              <g class="cad tag"><text x="1460" y="630">1</text><text x="1465" y="731">24</text></g>
              <g class="cad axis">
                <text transform="translate(1634 504) rotate(-90)">1720</text>
                <text transform="translate(1634 834) rotate(-90)">280</text>
              </g>
              <path d="M509 936V900" stroke="#00ff00" stroke-width="4" /><path d="M509 887l4 13h-8z" fill="#00ff00" />
              <path d="M509 936H547" stroke="#ff0000" stroke-width="4" /><path d="M558 936l-12-5v10z" fill="#ff0000" />
              <g class="cad gizmo"><text x="518" y="899" fill="#00ff00">Y</text><text x="546" y="925" fill="#ff0000">X</text></g>
              <circle cx="1696" cy="1013" r="34" fill="#e8ecfa" /><path d="M1715 986q6-1 11-4l-5 5z" fill="#7a72d8" />
            </g>
          </svg>

          <section class="dialog" role="dialog" aria-label="属性编辑器">
            <div class="dtitle"><b>属性编辑器</b><button type="button" aria-label="关闭"><svg width="7" height="7"><path d="M0 0l7 7M7 0L0 7" stroke="#000" /></svg></button></div>
            <div class="dbody">
              <table class="grid">
                <colgroup><col class="cnum" /><col class="pname" /><col class="pval" /><col class="padd" /></colgroup>
                <thead><tr><th></th><th>属性名称</th><th class="hot">属性值</th><th>附加</th></tr></thead>
                <tbody>
                  <tr v-for="(p, i) in props" :key="p.name" :class="p.tone">
                    <th scope="row">{{ i + 1 }}</th>
                    <td class="pn"><svg v-if="p.tone === 'grey'" width="13" height="13"><rect x=".5" y=".5" width="12" height="12" fill="#fff" stroke="#bcbcbc" /><path d="M3 6.500h7M6.500 3v7" stroke="#000" /></svg><span>{{ p.name }}</span></td>
                    <td class="pv">{{ p.value }}</td>
                    <td class="pc"><input v-if="p.check" type="checkbox" :aria-label="'附加 ' + p.name" /></td>
                  </tr>
                </tbody>
              </table>
            </div>
          </section>
        </div>

        <div class="barrow snaps">
          <Bar v-for="(b, i) in snapBars" :key="i" :items="b" />
          <div class="bar shift">
            <i class="grip"></i>
            <label class="combo off"><select aria-label="偏移方式"><option>不偏移</option></select></label>
            <i class="sep"></i>
            <label class="spin">X=<span><input type="text" value="0" disabled /><svg width="6" height="14"><path d="M0 4l3-3 3 3zM0 10l3 3 3-3z" /></svg></span>mm</label>
            <label class="spin">Y=<span><input type="text" value="0" disabled /><svg width="6" height="14"><path d="M0 4l3-3 3 3zM0 10l3 3 3-3z" /></svg></span>mm</label>
            <i class="sep"></i>
            <label class="turn"><input type="checkbox" />旋转</label>
            <label class="spin wide"><span><input type="text" value="0.000" aria-label="旋转角度" disabled /><svg width="6" height="14"><path d="M0 4l3-3 3 3zM0 10l3 3 3-3z" /></svg></span>°</label>
          </div>
        </div>
      </main>
    </div>

    <footer class="status">
      <span class="s1">X=74198 Y=19240</span><span class="s2">层高:2.95</span><span class="s3">底标高:8.65</span><span class="s4">0</span>
      <span class="s5">按鼠标左键指定第一个角点, 或拾取构件图元</span><span class="s6">760.69</span>
    </footer>
  </div>
</template>

<style>
body { overflow: hidden; background: #d4d0c8; }
</style>

<style scoped>
.app {
  --face: #d4d0c8;
  height: 100vh; overflow: hidden; display: flex; flex-direction: column; background: var(--face);
  font: 12px/16px "Liberation Serif", "Noto Sans CJK SC", sans-serif; color: #000; white-space: nowrap;
}
.app :deep(*) { box-sizing: border-box; }
button, input, select { font: inherit; color: inherit; margin: 0; border-radius: 0; }
.app :deep(button), .app :deep(select) { font: inherit; color: inherit; margin: 0; }
a { color: inherit; text-decoration: none; }
.app :deep(.icon) { flex: none; display: block; }
.app :deep(.tri) { flex: none; display: block; width: 6px; height: 3px; background: #000; clip-path: polygon(0 0, 100% 0, 50% 100%); }

.title { flex: none; height: 18px; display: flex; align-items: center; gap: 2px; padding-left: 2px; background: linear-gradient(90deg, #808080, #c0c0c0); overflow: hidden; }
.title h1 { margin: 0; font-size: 13px; line-height: 18px; font-weight: 500; color: #dedad2; flex: 1; }
.title code { font: 12px/18px "Liberation Mono", monospace; white-space: pre; }
.winbtn { flex: none; width: 16px; height: 13px; padding: 0; background: var(--face); border: 1px solid #fff; border-width: 1px 0 1px 1px; border-bottom-color: #404040; display: flex; align-items: end; }
.winbtn::before { content: ""; width: 6px; height: 2px; margin: 0 0 2px 4px; background: #000; }

.menu { flex: none; height: 28px; display: flex; align-items: center; gap: 12px; padding-left: 7px; }
.change { display: flex; align-items: center; gap: 3px; }
.change .tri { margin-left: 4px; }
.account { margin-left: auto; width: 116px; height: 24px; overflow: hidden; display: flex; align-items: center; gap: 8px; padding-left: 4px; border-radius: 3px 0 0 3px; background: linear-gradient(#f6f5f2, #dbd8d0); }
.account a { flex: none; display: flex; align-items: center; gap: 4px; }

.barrow { flex: none; display: flex; gap: 2px; height: 24px; }
.app :deep(.bar) { flex: none; display: flex; align-items: center; gap: 8px; height: 24px; padding: 0 5px 0 4px; border-radius: 3px; background: linear-gradient(#f7f6f3, #e9e7e1 60%, #dad7ce); }
.app :deep(.tool) { flex: none; display: flex; align-items: center; gap: 3px; height: 22px; padding: 0; border: 0; background: none; line-height: 16px; }
.app :deep(.tool[disabled]) { color: #8d8a84; }
.app :deep(.tool.on) { border: 1px solid #0a246a; background: #d3d2da; padding: 0 3px; margin: 0 -4px; }
.app :deep(.tool.arrow .tri) { margin-left: 4px; }
.app :deep(.tool.bare .icon) { display: none; }
.app :deep(.tool.bare .tri) { margin-left: 0; }
.app :deep(.tool.pale .tri) { background: #8d8a84; }
.app :deep(.sep) { flex: none; width: 1px; height: 16px; margin: 0 -2px; background: #a6a39b; }
.app :deep(.grip) { flex: none; width: 2px; height: 16px; margin: 0 -2px 0 0; background: repeating-linear-gradient(#a3a09a 0 2px, transparent 2px 5px); }
.app :deep(.combo) { flex: none; position: relative; display: flex; align-items: center; height: 20px; margin: 0 -3px; background: #fff; }
.app :deep(.combo .icon) { margin-left: 2px; }
.app :deep(.combo select) { appearance: none; flex: 1; min-width: 0; height: 20px; border: 1px solid #fff; border-radius: 0; padding: 0 0 0 1px; line-height: 16px; background: linear-gradient(#e9e7e1, #e9e7e1) right / 11px 100% no-repeat #fff; }
.app :deep(.combo)::after { content: ""; position: absolute; right: 3px; top: 9px; width: 6px; height: 3px; background: #000; clip-path: polygon(0 0, 100% 0, 50% 100%); pointer-events: none; }

.work { flex: 1; min-height: 0; display: flex; padding-top: 3px; }
.modules { flex: none; width: 165px; display: flex; flex-direction: column; margin-right: 5px; padding-bottom: 1px; }
.panels { flex: none; width: 280px; display: flex; flex-direction: column; gap: 6px; margin-right: 4px; padding-bottom: 1px; }
.stage { flex: 1; min-width: 0; display: flex; flex-direction: column; gap: 2px; overflow: hidden; }
.mid1 { gap: 74px; }
.mid2 { gap: 300px; }
.mid2 :deep(.bar):last-child { width: 31px; }

.cap { flex: none; height: 16px; display: flex; align-items: center; gap: 6px; padding-right: 4px; border: 1px solid #8b8881; }
.modules .cap { margin-bottom: 1px; }
.cap b { flex: 1; font-size: 13px; line-height: 14px; font-weight: 400; }
.cap svg { fill: none; stroke: #000; }
.cap .pin { margin-right: 8px; }
.pinbox { display: flex; align-items: center; justify-content: center; width: 16px; height: 14px; border: 1px solid #fff; border-right-color: #404040; border-bottom-color: #404040; }
.slot { flex: none; height: 22px; padding: 0; background: var(--face); border: 1px solid #fff; border-right-color: #808080; border-bottom-color: #808080; line-height: 16px; }
.mini { flex: none; height: 27px; padding: 5px 0 0 6px; border: 1px solid #808080; border-width: 1px 0 0; background: linear-gradient(#f3f2ee, #d9d6ce); margin: 1px 1px 0 2px; }
.mini svg { display: block; }
.tree { flex: 1; min-height: 0; margin: 0; padding: 0; list-style: none; background: #fff; border: 1px solid #404040; border-right-color: #e6e3dc; border-bottom-color: #e6e3dc; overflow: hidden; }
.modules .tree { margin: 0 2px 2px; }
.tree li { display: flex; align-items: center; height: 16px; }
.guide { flex: none; display: block; }
.dots { fill: none; stroke: #808080; stroke-dasharray: 1 1; }
.box { fill: #fff; stroke: #808080; }
.sign { stroke: #000; }
.txt { margin: 0 2px 0 3px; padding: 0 2px; height: 16px; }
.root .txt { margin: 0 0 0 2px; }
.txt.on { background: #d4d0c8; }
.txt.picked { background: #316ac5; }
.fresh { align-self: flex-start; margin-left: 2px; font: italic 700 9px/10px "Liberation Sans", sans-serif; background: #ffe100; }

.partlist { flex: 455 1 0; min-height: 0; display: flex; flex-direction: column; }
.partlist :deep(.listbar) { height: 27px; padding-left: 5px; gap: 10px; }
.find { flex: none; display: flex; height: 24px; margin-bottom: 2px; background: #fff; }
.find input { width: 255px; border: 2px solid #d4d0c8; border-top-color: #404040; border-left-color: #404040; padding: 0 1px 4px; background: #fff; outline: 0; }
.find input::placeholder { color: #8a8a8a; opacity: 1; }
.find button { flex: 1; border: 0; background: none; padding: 0 0 0 4px; }
.partlist .tree { margin: 0 0 0 1px; }

.sheets { flex: 478 1 0; min-height: 0; display: flex; flex-direction: column; }
.tabs { flex: none; display: flex; align-items: end; height: 20px; padding-left: 1px; }
.tabs button { height: 18px; padding: 0 3px; border: 1px solid #fff; border-right: 2px solid #606060; border-bottom: 0; border-radius: 2px 2px 0 0; background: var(--face); line-height: 16px; }
.tabs .cur { height: 20px; padding: 0 6px 2px; }
.pane { flex: 1; min-height: 0; display: flex; flex-direction: column; padding: 4px 4px 3px; border: 1px solid #fff; border-right: 2px solid #606060; border-bottom: 2px solid #606060; }
.cmds { flex: none; display: flex; height: 24px; padding-bottom: 5px; margin-bottom: 2px; border-bottom: 1px solid #808080; }
.cmds button { height: 19px; width: 58px; padding: 0; border: 1px solid #808080; box-shadow: inset 1px 1px #eceae5; background: var(--face); line-height: 16px; }
.cmds .drop { width: 12px; display: flex; align-items: center; justify-content: center; }
.cmds .more { width: 12px; margin-left: auto; font-size: 14px; }
.sheetbox { flex: 1; min-height: 0; background: #fff; border: 1px solid #404040; border-right-color: #e6e3dc; border-bottom-color: #e6e3dc; overflow: hidden; }

.grid { border-collapse: separate; border-spacing: 0; table-layout: fixed; width: 0; }
.grid th, .grid td { height: 19px; padding: 0; border: 0 solid #bdbdbd; border-width: 0 1px 1px 0; line-height: 16px; font-weight: 400; overflow: hidden; }
.grid th { background: linear-gradient(#fdfdfd, #d9d6ce); text-align: center; }
.grid thead th { height: 26px; }
.grid .hot { background: linear-gradient(#f9d79a, #f3bf62); color: #5a005a; }
.cnum { width: 21px; }
.cname { width: 151px; }
.cscale { width: 56px; }
.sheetbox td { background: #ff0; padding-left: 3px; }
.sheetbox .group td { background: #fff; }
.sheetbox td.name { padding: 0; }
.name div { display: flex; align-items: center; height: 18px; width: 150px; overflow: hidden; }
.name svg { flex: none; display: block; }
.branch { stroke: #bcbcbc; fill: none; }
.grid .current th { background: #ffce80; color: #5a005a; }
.sheetbox .current td.name { background: #ffff66; outline: 2px solid #000; outline-offset: -1px; }
.current span { padding-left: 2px; }

.canvas { flex: 1; min-height: 0; position: relative; background: #000; overflow: hidden; margin-top: -1px; }
.plan { position: absolute; inset: 0; }
.crisp { shape-rendering: crispEdges; }
.cad { font-family: Roboto, sans-serif; font-weight: 100; fill: #fff; }
.axis { font-size: 18px; font-weight: 300; }
.big { font-size: 84px; fill: #00ff00; }
.room { font-size: 78px; }
.tag { font-size: 66px; }
.gizmo { font-size: 14px; font-weight: 300; }

.dialog { position: absolute; left: 723px; top: 140px; width: 258px; height: 670px; display: flex; flex-direction: column; gap: 2px; padding: 3px; background: var(--face); border: 1px solid #ece9e2; border-right-color: #404040; border-bottom-color: #404040; }
.dtitle { flex: none; height: 15px; display: flex; align-items: center; justify-content: space-between; padding: 0 2px 0 1px; background: linear-gradient(90deg, #0a246a, #a6caf0); color: #fff; }
.dtitle b { font-size: 13px; line-height: 15px; }
.dtitle button { width: 10px; height: 11px; padding: 0; border: 1px solid #fff; border-right-color: #404040; border-bottom-color: #404040; background: var(--face); display: flex; align-items: center; justify-content: center; }
.dtitle svg { flex: none; }
.dbody { flex: 1; min-height: 0; background: #fff; border: 1px solid #404040; border-right-color: #e6e3dc; border-bottom-color: #e6e3dc; }
.dialog .grid thead th { height: 23px; }
.pname { width: 121px; }
.pval { width: 73px; }
.padd { width: 31px; }
.grid .pn { padding-left: 20px; }
.grid .grey .pn { padding-left: 3px; color: #8a8a8a; }
.pn svg { vertical-align: -3px; margin-right: 4px; }
.grid .pv { padding-left: 2px; white-space: pre; }
.blue .pn { color: #0000ff; }
.active .pn { background: #0a246a; color: #fff; }
.active .pv { background: #d9dde9; }
.grid .active th { background: #ffce80; color: #5a005a; }
.grid .pc { text-align: center; line-height: 0; }
.pc input, .turn input { appearance: none; width: 13px; height: 13px; margin: 0; border: 1px solid #1c5180; background: #fff; }

.snaps { height: 26px; padding-bottom: 2px; }
.shift.bar { gap: 6px; }
.off { width: 58px; }
.spin { display: flex; align-items: center; gap: 2px; color: #8d8a84; font: 10px/16px "Liberation Mono", monospace; }
.spin span { position: relative; display: flex; }
.spin input { width: 58px; height: 19px; padding: 0 19px 0 0; border: 1px solid #8d8a84; background: transparent; text-align: right; font: 12px/16px "Liberation Serif", serif; }
.spin.wide input { width: 68px; }
.spin svg { position: absolute; right: 4px; top: 3px; fill: #8d8a84; }
.turn { display: flex; align-items: center; gap: 8px; }
.turn input { width: 12px; height: 12px; background: none; border-color: #8d8a84; }

.status { flex: none; display: flex; gap: 3px; height: 24px; margin-bottom: -15px; padding: 1px 0 2px 1px; border-top: 1px solid #fff; background: #e6e4de; }
.status span { flex: none; padding: 1px 2px; border: 1px solid #b5b2ab; background: #eceae5; }
.status .s1 { width: 147px; }
.status .s2 { width: 77px; }
.status .s3 { width: 97px; }
.status .s4 { width: 47px; }
.status .s5 { flex: 1; }
.status .s6 { width: 32px; overflow: hidden; }
</style>
